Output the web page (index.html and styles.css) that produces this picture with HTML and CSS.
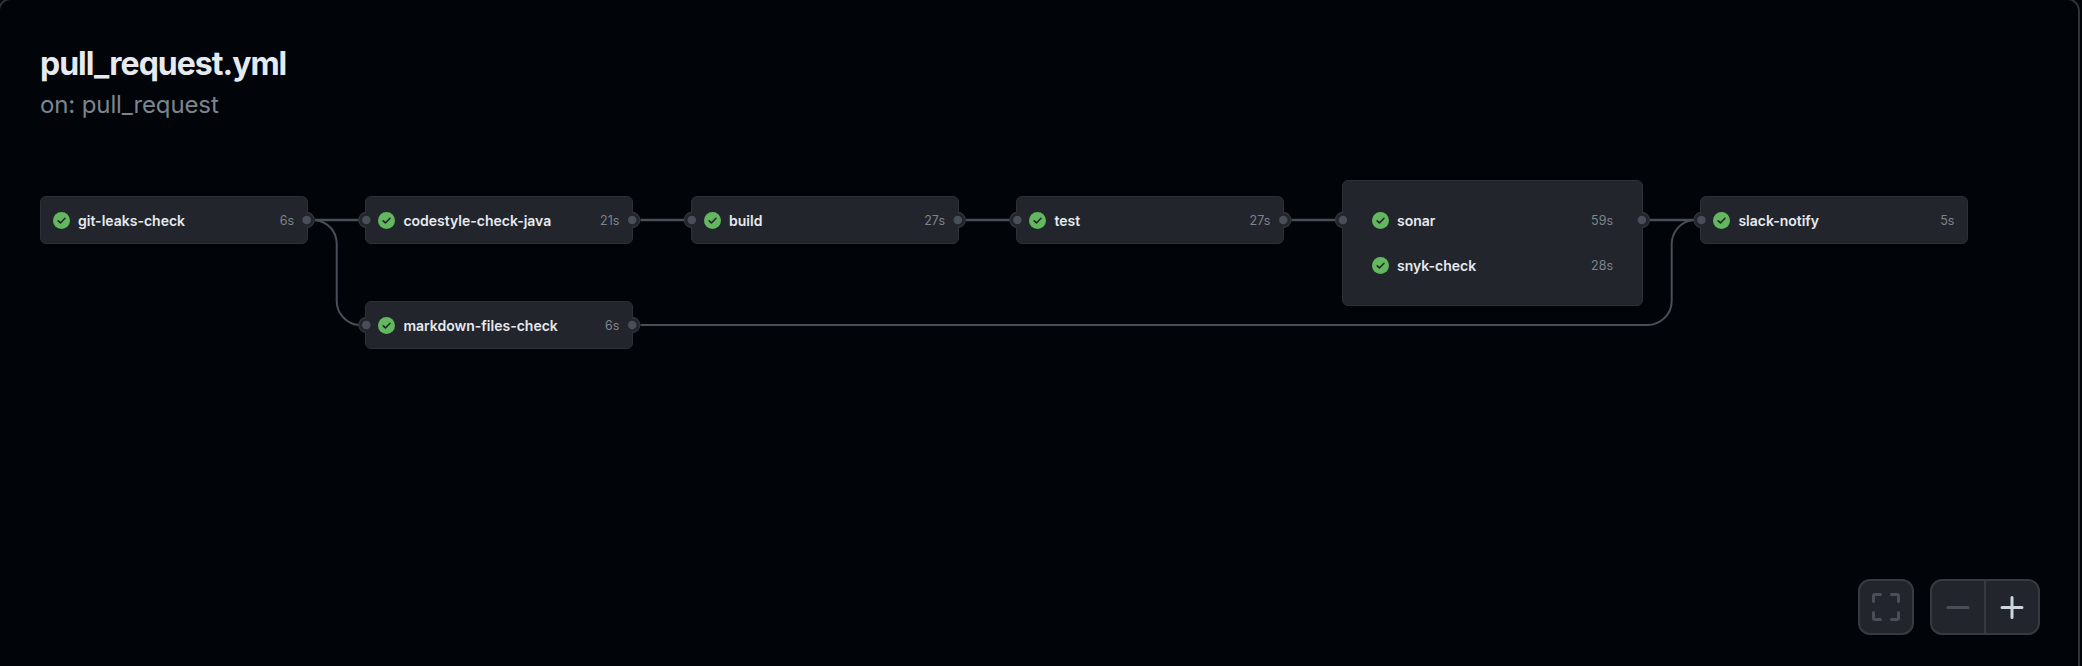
FILE: index.html
```html
<!DOCTYPE html>
<html lang="en">
<head>
<meta charset="utf-8">
<title>pull_request.yml</title>
<link rel="stylesheet" href="styles.css">
</head>
<body>
<svg class="defs" width="0" height="0">
  <symbol id="check" viewBox="0 0 16 16">
    <circle class="check-disc" cx="8" cy="8" r="8"/>
    <path class="check-mark" d="M4.9 8.3 7 10.3 11.3 5.9"/>
  </symbol>
</svg>
<main class="frame">
  <header class="header">
    <h1 class="title">pull_request.yml</h1>
    <p class="trigger">on: pull_request</p>
  </header>

  <section class="graph">
    <div class="node node-leaks"><div class="job"><svg class="icon"><use href="#check"/></svg><span class="name">git-leaks-check</span><span class="time">6s</span></div></div>
    <div class="node node-style"><div class="job"><svg class="icon"><use href="#check"/></svg><span class="name">codestyle-check-java</span><span class="time">21s</span></div></div>
    <div class="node node-markdown"><div class="job"><svg class="icon"><use href="#check"/></svg><span class="name">markdown-files-check</span><span class="time">6s</span></div></div>
    <div class="node node-build"><div class="job"><svg class="icon"><use href="#check"/></svg><span class="name">build</span><span class="time">27s</span></div></div>
    <div class="node node-test"><div class="job"><svg class="icon"><use href="#check"/></svg><span class="name">test</span><span class="time">27s</span></div></div>
    <div class="node node-scan">
      <div class="job"><svg class="icon"><use href="#check"/></svg><span class="name">sonar</span><span class="time">59s</span></div>
      <div class="job"><svg class="icon"><use href="#check"/></svg><span class="name">snyk-check</span><span class="time">28s</span></div>
    </div>
    <div class="node node-slack"><div class="job"><svg class="icon"><use href="#check"/></svg><span class="name">slack-notify</span><span class="time">5s</span></div></div>

    <svg class="edges" width="2078" height="240" viewBox="0 160 2078 240">
      <g class="ports">
        <circle cx="306.7" cy="220" r="7.5"/><circle cx="366.3" cy="220" r="7.5"/>
        <circle cx="366.3" cy="325" r="7.5"/><circle cx="632.2" cy="325" r="7.5"/>
        <circle cx="632.2" cy="220" r="7.5"/><circle cx="691.8" cy="220" r="7.5"/>
        <circle cx="957.8" cy="220" r="7.5"/><circle cx="1017.4" cy="220" r="7.5"/>
        <circle cx="1283.3" cy="220" r="7.5"/><circle cx="1342.9" cy="220" r="7.5"/>
        <circle cx="1641.9" cy="220" r="7.5"/><circle cx="1701.4" cy="220" r="7.5"/>
      </g>
      <g class="masks">
        <rect x="298" y="212" width="9" height="16"/><rect x="366" y="212" width="9" height="16"/>
        <rect x="366" y="317" width="9" height="16"/><rect x="623" y="317" width="9" height="16"/>
        <rect x="623" y="212" width="9" height="16"/><rect x="692" y="212" width="9" height="16"/>
        <rect x="949" y="212" width="9" height="16"/><rect x="1017" y="212" width="9" height="16"/>
        <rect x="1274" y="212" width="9" height="16"/><rect x="1343" y="212" width="9" height="16"/>
        <rect x="1633" y="212" width="9" height="16"/><rect x="1701" y="212" width="9" height="16"/>
      </g>
      <g class="lines">
        <path class="straight" d="M315 220H358.5M640.5 220H684M966 220H1009.5M1291.5 220H1335M1650 220H1693.5"/>
        <path d="M315 220C329 222 336.7 232 336.7 244V301C336.7 314 347 324 358.500 325"/>
        <path d="M640.5 325H1647C1661 325 1671.7 314 1671.7 301V244C1671.7 232 1681 221 1693.5 220"/>
      </g>
      <g class="dots">
        <circle cx="306.7" cy="220" r="4.3"/><circle cx="366.3" cy="220" r="4.3"/>
        <circle cx="366.3" cy="325" r="4.3"/><circle cx="632.2" cy="325" r="4.3"/>
        <circle cx="632.2" cy="220" r="4.3"/><circle cx="691.8" cy="220" r="4.3"/>
        <circle cx="957.8" cy="220" r="4.3"/><circle cx="1017.4" cy="220" r="4.3"/>
        <circle cx="1283.3" cy="220" r="4.3"/><circle cx="1342.9" cy="220" r="4.3"/>
        <circle cx="1641.9" cy="220" r="4.3"/><circle cx="1701.4" cy="220" r="4.3"/>
      </g>
    </svg>
  </section>

  <nav class="controls">
    <div class="group">
      <button class="control off" aria-label="Fit"><svg width="28" height="28" viewBox="0 0 28 28"><path d="M1.5 8.5V3Q1.5 1.5 3 1.5H8.5M19.5 1.5H25Q26.5 1.5 26.5 3V8.5M26.5 19.5V25Q26.5 26.5 25 26.5H19.5M8.5 26.5H3Q1.5 26.5 1.5 25V19.5"/></svg></button>
    </div>
    <div class="group">
      <button class="control off" aria-label="Zoom out"><svg width="28" height="28" viewBox="0 0 28 28"><path d="M4 14.5H24"/></svg></button>
      <button class="control" aria-label="Zoom in"><svg width="28" height="28" viewBox="0 0 28 28"><path d="M4 14.5H24M14 4.5V24.5"/></svg></button>
    </div>
  </nav>
</main>
</body>
</html>
```
FILE: styles.css
```css
* { box-sizing: border-box; }
body {
  margin: 0;
  height: 666px;
  overflow: hidden;
  background: #010409;
  font-family: Inter, "Noto Sans", sans-serif;
}
.defs { position: absolute; }
.frame {
  position: relative;
  width: 2082px;
  height: 690px;
  margin: -2px 0 0 -2px;
  border: 2px solid #30333a;
  border-radius: 13px;
}
.header { padding: 44px 40px 0; height: 160px; }
.title {
  margin: 0;
  font-size: 32px;
  line-height: 40px;
  font-weight: 700;
  letter-spacing: -1px;
  color: #e6eaf0;
}
.trigger {
  margin: 6px 0 0;
  font-size: 24px;
  line-height: 30px;
  letter-spacing: -0.12px;
  color: #7d848d;
}
.graph { position: relative; height: 240px; }
.edges { position: absolute; left: 0; top: 0; }
.ports { fill: #22252c; stroke: #30343b; stroke-width: 1.3; }
.masks { fill: #22252c; }
.lines { fill: none; stroke: #484f58; stroke-width: 2; }
.straight { stroke-width: 2.5; }
.dots { fill: #484f58; }

.node {
  position: absolute;
  top: 36px;
  width: 268px;
  height: 48px;
  padding: 0 13px 0 12px;
  display: flex;
  flex-direction: column;
  background: #22252c;
  border: 1px solid #2d3037;
  border-radius: 6px;
}
.node-leaks { left: 40px; }
.node-style { left: 365.4px; }
.node-markdown { left: 365.4px; top: 141px; }
.node-build { left: 691px; }
.node-test { left: 1016.4px; }
.node-scan {
  left: 1342px;
  top: 20px;
  width: 301px;
  height: 125.5px;
  padding: 16px 29px 0;
}
.node-slack { left: 1700.4px; }

.job {
  display: flex;
  align-items: center;
  height: 46px;
  flex: none;
}
.job + .job { height: 45px; }
.icon { width: 17px; height: 17px; flex: none; }
.check-disc { fill: #63b85f; }
.check-mark {
  fill: none;
  stroke: #22252c;
  stroke-width: 1.5;
  stroke-linecap: round;
  stroke-linejoin: round;
}
.name {
  margin-left: 8px;
  padding-top: 2px;
  font-size: 14px;
  font-weight: 600;
  line-height: 20px;
  color: #e6eaf0;
  white-space: nowrap;
}
.job + .job .name, .job + .job .time { padding-top: 1px; }
.time {
  margin-left: auto;
  padding-top: 2px;
  font-size: 12.5px;
  line-height: 20px;
  color: #7d848d;
}

.controls {
  position: absolute;
  right: 38px;
  bottom: 51px;
  display: flex;
  gap: 16px;
}
.group {
  display: flex;
  height: 56px;
  border: 2px solid #373a40;
  border-radius: 12px;
  background: #22252c;
  overflow: hidden;
}
.control {
  width: 52px;
  height: 52px;
  padding: 0;
  border: 0;
  background: none;
  display: flex;
  align-items: center;
  justify-content: center;
  color: #cdd6df;
}
.control + .control { width: 54px; border-left: 2px solid #373a40; }
.control.off { color: #484f58; }
.control svg {
  fill: none;
  stroke: currentColor;
  stroke-width: 3;
  stroke-linecap: round;
}
```
